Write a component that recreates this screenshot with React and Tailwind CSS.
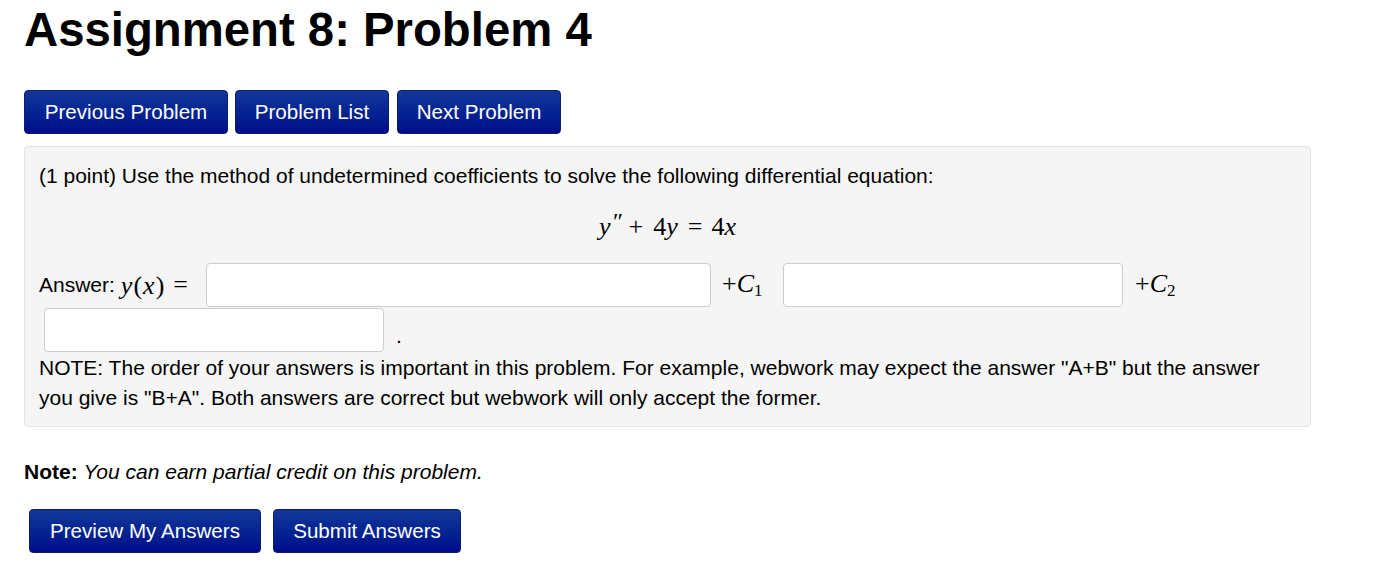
import React from 'react';

const sans = { fontFamily: '"Liberation Sans", Arial, sans-serif' };
const serif = { fontFamily: '"Liberation Serif", "Times New Roman", serif' };

function NavButton({ children, className = '' }) {
  return (
    <button
      className={`h-[44px] flex items-center justify-center rounded-[4px] border border-[#0a1f6e] bg-gradient-to-b from-[#14369a] to-[#000a8a] text-white text-[20.6px] leading-none ${className}`}
    >
      {children}
    </button>
  );
}

function AnswerBox({ className = '' }) {
  return (
    <input
      type="text"
      className={`h-[44px] rounded-[4px] border border-[#cccccc] bg-white outline-none ${className}`}
    />
  );
}

const M = ({ children, className = '' }) => (
  <span className={`italic ${className}`} style={serif}>
    {children}
  </span>
);

const R = ({ children, className = '' }) => (
  <span className={className} style={serif}>
    {children}
  </span>
);

export default function App() {
  return (
    <div className="min-h-screen bg-white text-black pl-[24px]" style={sans}>
      <h1 className="pt-[6px] text-[47.3px] leading-[47px] font-bold">Assignment 8: Problem 4</h1>

      <div className="flex mt-[37px]">
        <NavButton className="w-[204px]">Previous Problem</NavButton>
        <NavButton className="ml-[7px] w-[154px]">Problem List</NavButton>
        <NavButton className="ml-[8px] w-[164px]">Next Problem</NavButton>
      </div>

      <div className="mt-[12px] w-[1287px] rounded-[4px] border border-[#e3e3e3] bg-[#f5f5f5] px-[14px] pt-[14px] pb-[13px] text-[21px] leading-[30px]">
        <p>(1 point) Use the method of undetermined coefficients to solve the following differential equation:</p>

        <div className="mt-[21px] h-[30px] flex items-center justify-center text-[26px]">
          <M>y</M>
          <R className="ml-[1px] text-[24px] -mt-[12px] italic">″</R>
          <R className="ml-[7px]">+</R>
          <R className="ml-[10px]">4</R>
          <M>y</M>
          <R className="ml-[10px]">=</R>
          <R className="ml-[9px]">4</R>
          <M>x</M>
        </div>

        <div className="mt-[21px] flex items-center h-[44px]">
          <div className="w-[167px] flex items-center">
            <span>Answer:</span>
            <span className="ml-[6px] text-[26px] tracking-[1px]">
              <M>y</M><R>(</R><M>x</M><R>)</R>
            </span>
            <R className="ml-[8px] text-[26px]">=</R>
          </div>
          <AnswerBox className="w-[505px]" />
          <div className="w-[72px] pl-[11px] flex items-baseline text-[26px]">
            <R>+</R><M>C</M><R className="text-[17px] translate-y-[4px]">1</R>
          </div>
          <AnswerBox className="w-[340px]" />
          <div className="pl-[12px] flex items-baseline text-[26px]">
            <R>+</R><M>C</M><R className="text-[17px] translate-y-[4px]">2</R>
          </div>
        </div>

        <div className="mt-[1px] flex items-end h-[44px]">
          <AnswerBox className="ml-[5px] w-[340px]" />
          <span className="ml-[12px] mb-[6px] leading-none">.</span>
        </div>

        <p className="mt-[1px]">
          NOTE: The order of your answers is important in this problem. For example, webwork may expect the answer "A+B" but the answer you give is "B+A". Both answers are correct but webwork will only accept the former.
        </p>
      </div>

      <p className="mt-[30px] text-[21px] leading-[30px]">
        <span className="font-bold">Note:</span> <span className="italic">You can earn partial credit on this problem.</span>
      </p>

      <div className="flex mt-[22px] ml-[5px]">
        <NavButton className="w-[232px]">Preview My Answers</NavButton>
        <NavButton className="ml-[12px] w-[188px]">Submit Answers</NavButton>
      </div>
    </div>
  );
}
